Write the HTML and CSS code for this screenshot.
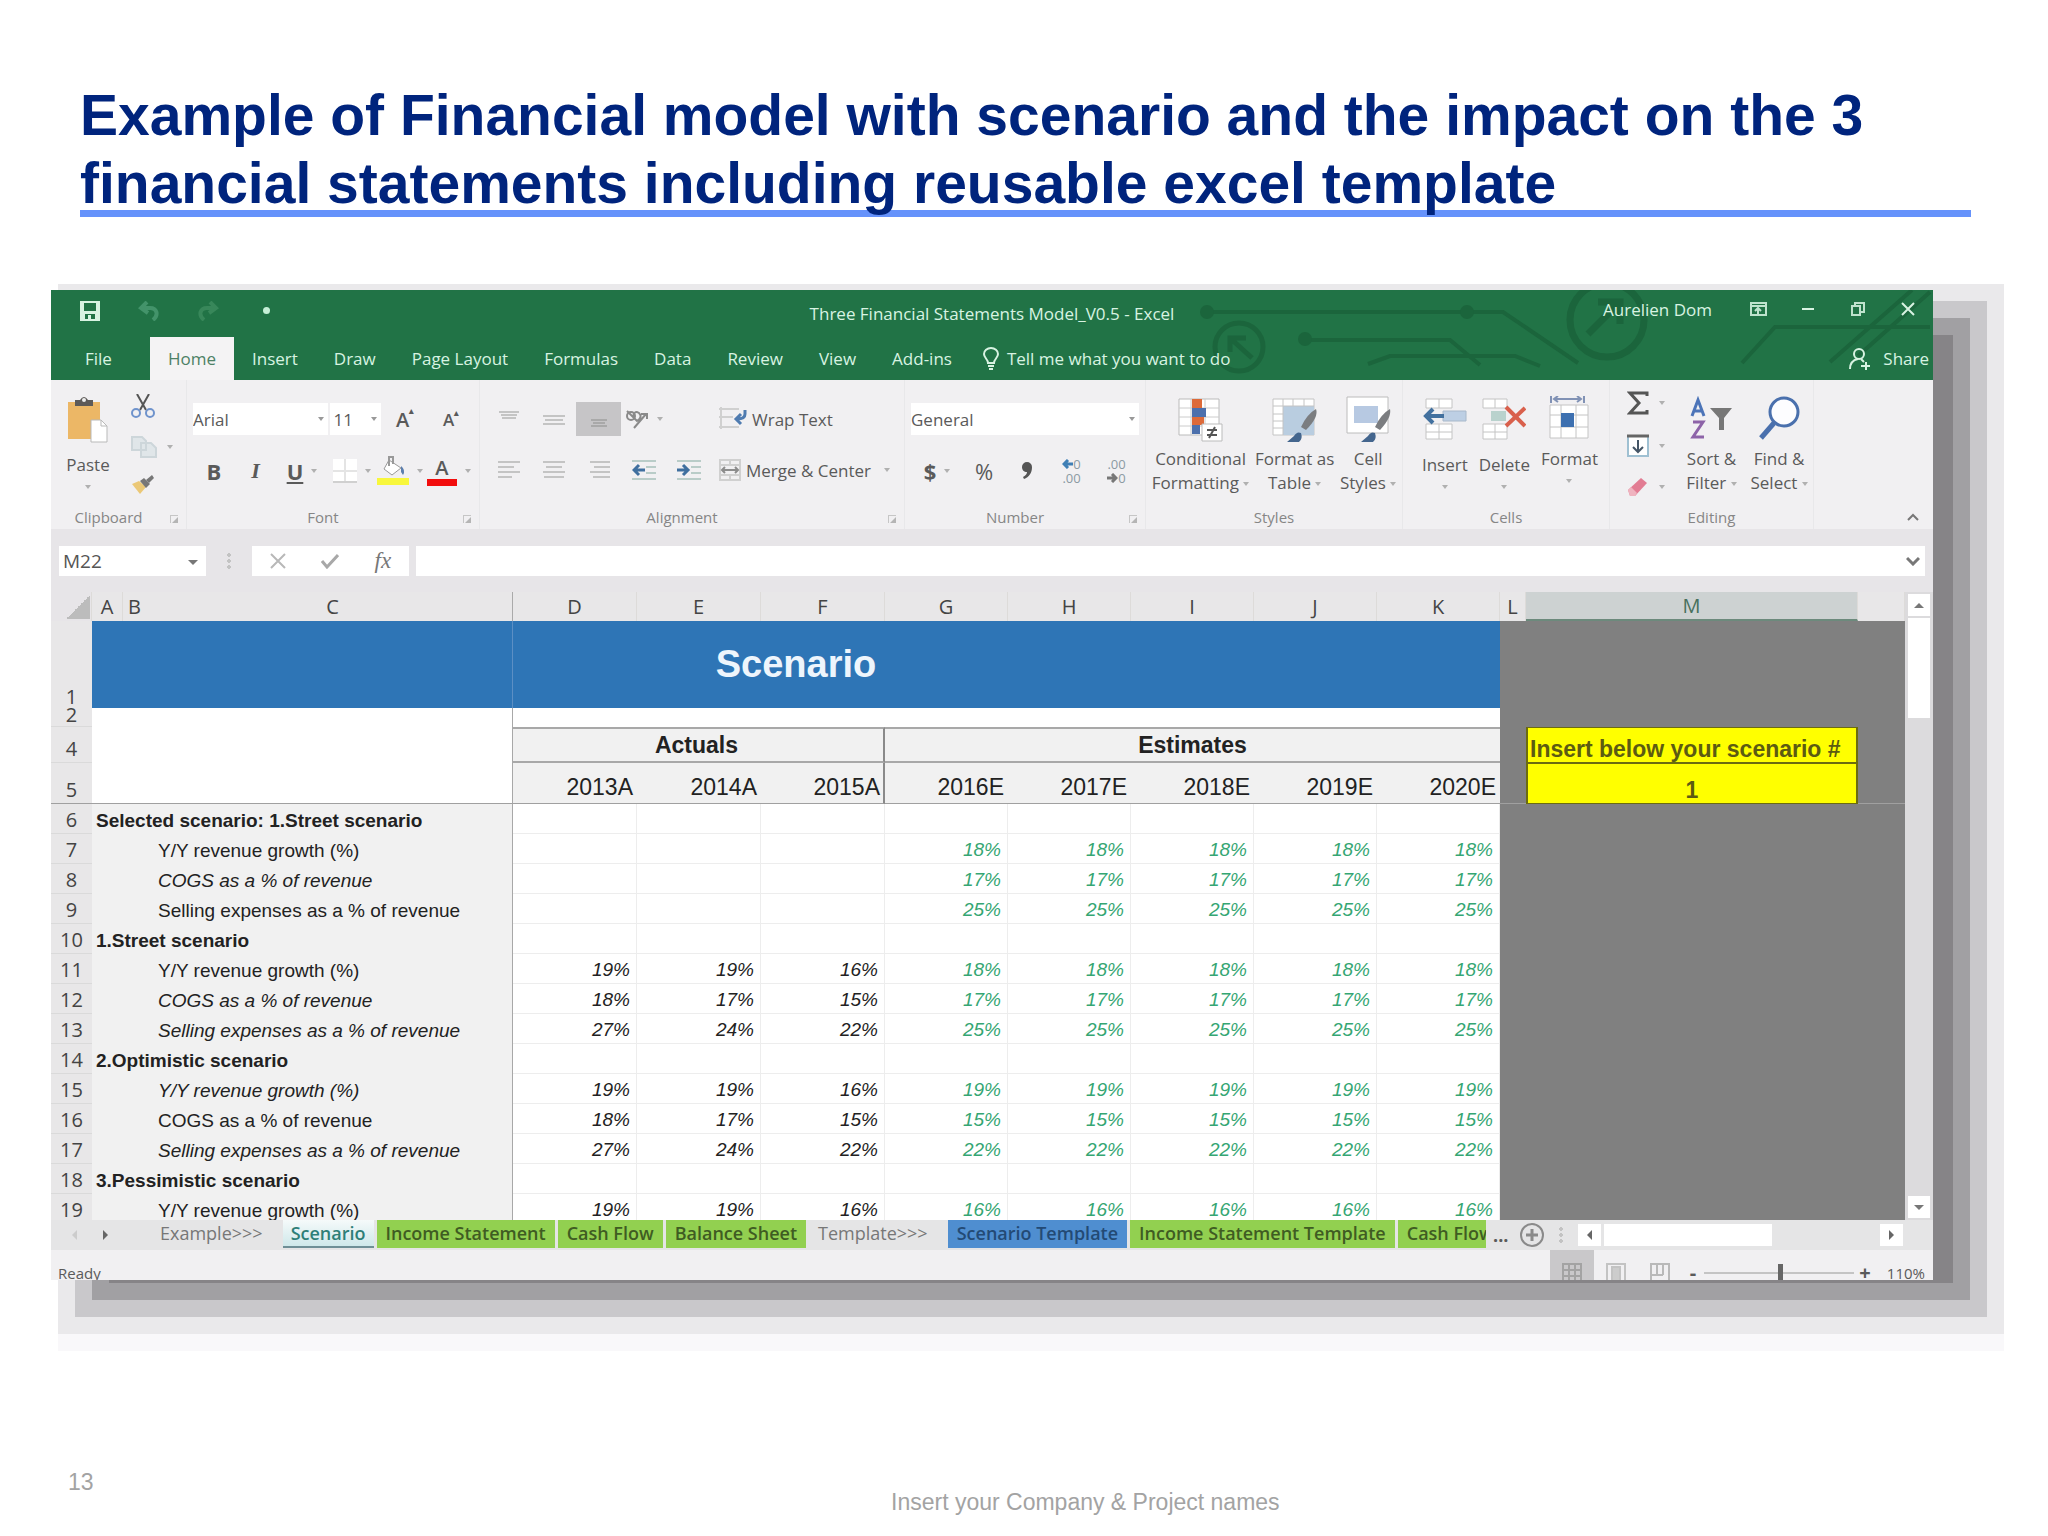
FILE: index.html
```html
<!DOCTYPE html>
<html lang="en">

<head>
  <meta charset="UTF-8">
  <meta name="viewport" content="width=device-width, initial-scale=1.0">
  <title>Financial model example</title>
  <link rel="stylesheet" href="styles.css">
</head>

<body>

  <header class="slide-header">
    <h1>Example of Financial model with scenario and the impact on the 3 financial statements including reusable excel template</h1>
  </header>

  <main class="window">

    <div class="green">
      <svg class="circuit" width="743" height="90" viewBox="0 0 743 90" fill="none" stroke="#1b653c" stroke-width="4">
        <path d="M17 22H313L388 73M115 50H260L290 75M178 74L200 66H325L350 76M552 73L585 37H740M640 72L722 0M668 66L740 2" />
        <circle cx="49" cy="57" r="24" stroke-width="5" />
        <path d="M40 48L62 68M40 62V48H56" stroke-width="5" />
        <circle cx="417" cy="30" r="37" stroke-width="7" />
        <path d="M398 44L428 14M408 12H430V34" stroke-width="7" />
        <g fill="#1b653c" stroke="none">
          <circle cx="17" cy="22" r="7" />
          <circle cx="277" cy="22" r="7" />
          <circle cx="115" cy="49" r="7" />
        </g>
      </svg>

      <div class="titlebar">
        <div class="quick">
          <button aria-label="Save">
            <svg width="20" height="20" viewBox="0 0 20 20"><path d="M0 0h20v20H0zM4 2v8h12V2zM5 13v5h3v-4h3v4h4v-5z" fill="#d8f3e2" fill-rule="evenodd" /></svg>
          </button>
          <button aria-label="Undo">
            <svg width="22" height="20" viewBox="0 0 22 20" fill="none" stroke="#43936a" stroke-width="4"><path d="M9 1L3 7l7 5M3 7h9c7 0 9 7 3 12" /></svg>
          </button>
          <button aria-label="Redo">
            <svg width="22" height="20" viewBox="0 0 22 20" fill="none" stroke="#38875a" stroke-width="4"><path d="M13 1l6 6-7 5M19 7h-9c-7 0-9 7-3 12" /></svg>
          </button>
          <button aria-label="Customize"><i class="dot"></i></button>
        </div>
        <div class="doc-title">Three Financial Statements Model_V0.5 - Excel</div>
        <div class="account">
          <span class="user">Aurelien Dom</span>
          <button aria-label="Ribbon display">
            <svg width="17" height="14" viewBox="0 0 17 14" fill="none" stroke="#bfe3cd" stroke-width="2"><path d="M1 1h15v12H1zM1 4h15M8 12V6M5 9l3-3 3 3" /></svg>
          </button>
          <button aria-label="Minimize">
            <svg width="14" height="14" viewBox="0 0 14 14"><path d="M1 7h12" stroke="#d8f3e2" stroke-width="2" /></svg>
          </button>
          <button aria-label="Restore">
            <svg width="14" height="14" viewBox="0 0 14 14" fill="none" stroke="#bfe3cd" stroke-width="2"><path d="M1 4h8v9H1zM4 4V1h9v9H9" /></svg>
          </button>
          <button aria-label="Close">
            <svg width="14" height="14" viewBox="0 0 14 14"><path d="M1 1l12 12M13 1L1 13" stroke="#d8f3e2" stroke-width="2" /></svg>
          </button>
        </div>
      </div>

      <nav class="menu">
        <a href="#" class="file">File</a>
        <a href="#" class="active">Home</a>
        <a href="#">Insert</a>
        <a href="#">Draw</a>
        <a href="#">Page Layout</a>
        <a href="#">Formulas</a>
        <a href="#">Data</a>
        <a href="#">Review</a>
        <a href="#">View</a>
        <a href="#">Add-ins</a>
        <a href="#" class="tell">
          <svg width="16" height="23" viewBox="0 0 16 23" fill="none" stroke="#d8f3e2" stroke-width="2"><path d="M5 16c0-4-4-5-4-9a7 6 0 0 1 14 0c0 4-4 5-4 9zM5 19h6M6 22h4" /></svg>
          Tell me what you want to do
        </a>
        <a href="#" class="share">
          <svg width="22" height="22" viewBox="0 0 22 22" fill="none" stroke="#d8f3e2" stroke-width="2"><circle cx="10" cy="6" r="5" /><path d="M1 21c0-6 3-9 8-10M12 11l3 3M12 18h9M17 14v8" /></svg>
          Share
        </a>
      </nav>
    </div>

    <div class="ribbon">

      <section class="group">
        <div class="group-body clipboard">
          <button class="big low">
            <svg width="42" height="48" viewBox="0 0 42 48"><path d="M1 6h32v37H1z" fill="#ecb766" /><path d="M8 4h5q4-6 8 0h5v6H8z" fill="#5d5a58" /><circle cx="17" cy="4" r="2" fill="#eee" /><path d="M24 24h10l6 6v16H24z" fill="#fff" stroke="#b9b9b9" /><path d="M34 24v6h6" fill="none" stroke="#b9b9b9" /></svg>
            <span>Paste</span><i class="arrow"></i>
          </button>
          <div class="stack">
            <button aria-label="Cut">
              <svg width="24" height="24" viewBox="0 0 24 24" fill="none" stroke-width="2"><path d="M6 0l9 16M18 0L9 16" stroke="#555" /><circle cx="5" cy="19" r="4" stroke="#6f93cc" /><circle cx="19" cy="19" r="4" stroke="#6f93cc" /></svg>
            </button>
            <button aria-label="Copy">
              <svg width="26" height="22" viewBox="0 0 26 22" fill="#e0e6e9" stroke="#cdd6da" stroke-width="2"><path d="M1 1h10l4 4v9H1zM10 7h10l5 5v9H10z" /></svg>
              <i class="arrow"></i>
            </button>
            <button aria-label="Format Painter">
              <svg width="24" height="20" viewBox="0 0 24 20"><path d="M1 9l7-3 7 6-6 7z" fill="#ebc877" /><path d="M9 6l4-3 6 6-4 4z" fill="#777" /><path d="M15 5l6-5 2 3-5 5z" fill="#777" /></svg>
            </button>
          </div>
        </div>
        <div class="group-name launches">Clipboard<i class="launcher"></i></div>
      </section>

      <section class="group">
        <div class="group-body rows">
          <div class="row font-row">
            <span class="pick"><select aria-label="Font"><option>Arial</option></select></span>
            <span class="pick size"><select aria-label="Font size"><option>11</option></select></span>
            <button class="grow-a" aria-label="Increase font size">A<sup>&#9652;</sup></button>
            <button class="grow-a small" aria-label="Decrease font size">A<sup>&#9652;</sup></button>
          </div>
          <div class="row style-row">
            <button class="bold">B</button>
            <button class="italic">I</button>
            <button class="under"><u>U</u><i class="arrow"></i></button>
            <button aria-label="Borders">
              <svg width="24" height="24" viewBox="0 0 24 24"><path d="M0 0h24v24H0z" fill="#fff" /><path d="M12 0v24M0 12h24" stroke="#e4e4e4" stroke-width="2" /><path d="M0 23h24" stroke="#d0d0d0" stroke-width="2" /></svg>
              <i class="arrow"></i>
            </button>
            <button aria-label="Fill color">
              <svg width="32" height="30" viewBox="0 0 32 30"><path d="M12 4l12 8-9 7-8-6z" fill="#fff" stroke="#999" /><path d="M12 10V1h4v7" fill="none" stroke="#999" stroke-width="2" /><path d="M24 10q5 4 2 9l-2-3z" fill="#5c7fae" /><path d="M0 22h32v7H0z" fill="#f8f73c" /></svg>
              <i class="arrow"></i>
            </button>
            <button class="font-color" aria-label="Font color"><span>A</span><i class="arrow"></i></button>
          </div>
        </div>
        <div class="group-name launches">Font<i class="launcher"></i></div>
      </section>

      <section class="group">
        <div class="group-body align">
          <button aria-label="Top align"><svg width="20" height="20" viewBox="0 0 20 20" stroke="#c4c4c4" stroke-width="2"><path d="M0 3h20M2 6h16M3 9h14" /></svg></button>
          <button aria-label="Middle align"><svg width="22" height="20" viewBox="0 0 22 20" stroke="#c4c4c4" stroke-width="2"><path d="M0 7h22M2 11h18M0 15h22" /></svg></button>
          <button class="pressed" aria-label="Bottom align"><svg width="20" height="20" viewBox="0 0 20 20" stroke="#a9a9a9" stroke-width="2"><path d="M2 11h16M4 14h12M2 17h16" /></svg></button>
          <button aria-label="Orientation">
            <svg width="24" height="20" viewBox="0 0 24 20" fill="none" stroke="#8a8a8a" stroke-width="2"><circle cx="6" cy="7" r="4" /><path d="M2 2l10 10q6-4 2-8-5-3-6 4M9 19L21 5M16 5h6v5" /></svg>
            <i class="arrow"></i>
          </button>
          <button class="wide">
            <svg width="28" height="24" viewBox="0 0 28 24" fill="none" stroke="#d0d0d0" stroke-width="2"><path d="M0 2h20M0 10h14M0 20h20M2 0v22" /><path d="M26 3v4q0 5-8 5M22 7l-5 5 5 5" stroke="#4f7bb0" stroke-width="3" /></svg>
            Wrap Text
          </button>
          <button aria-label="Align left"><svg width="22" height="20" viewBox="0 0 22 20" stroke="#c4c4c4" stroke-width="2"><path d="M0 2h22M0 7h16M0 12h22M0 17h14" /></svg></button>
          <button aria-label="Center"><svg width="22" height="20" viewBox="0 0 22 20" stroke="#c4c4c4" stroke-width="2"><path d="M0 2h22M3 7h16M0 12h22M1 17h20" /></svg></button>
          <button aria-label="Align right"><svg width="22" height="20" viewBox="0 0 22 20" stroke="#c4c4c4" stroke-width="2"><path d="M2 2h20M6 7h16M2 12h20M5 17h17" /></svg></button>
          <button aria-label="Decrease indent"><svg width="24" height="20" viewBox="0 0 24 20" fill="none" stroke="#b9ccc8" stroke-width="2"><path d="M0 1h24M14 7h10M14 13h10M0 19h24" /><path d="M2 10h11M7 5l-5 5 5 5" stroke="#3f6f9f" stroke-width="3" /></svg></button>
          <button aria-label="Increase indent"><svg width="24" height="20" viewBox="0 0 24 20" fill="none" stroke="#b9ccc8" stroke-width="2"><path d="M0 1h24M14 7h10M14 13h10M0 19h24" /><path d="M0 10h11M6 5l5 5-5 5" stroke="#3f6f9f" stroke-width="3" /></svg></button>
          <button class="wide">
            <svg width="22" height="22" viewBox="0 0 22 22" fill="none" stroke="#d0d0d0" stroke-width="2"><path d="M1 1h20v20H1zM11 1v5M11 16v5M1 6h20M1 16h20" /><path d="M3 11h16M6 8l-3 3 3 3M16 8l3 3-3 3" stroke="#8c8c8c" /></svg>
            Merge &amp; Center <i class="arrow"></i>
          </button>
        </div>
        <div class="group-name launches">Alignment<i class="launcher"></i></div>
      </section>

      <section class="group">
        <div class="group-body rows">
          <div class="row number-row">
            <span class="pick"><select aria-label="Number format"><option>General</option></select></span>
          </div>
          <div class="row digits-row">
            <button class="glyph"><b>$</b><i class="arrow"></i></button>
            <button class="glyph">%</button>
            <button class="comma" aria-label="Comma style"><svg width="12" height="18" viewBox="0 0 12 18"><path d="M1 5a5 5 0 0 1 10 0c0 6-3 10-8 12l-1-2c3-2 4-3 4-5-3 0-5-2-5-5z" fill="#555" /></svg></button>
            <button class="decimals"><span><svg width="11" height="10" viewBox="0 0 11 10" fill="none" stroke="#3f7fb5" stroke-width="3"><path d="M2 5h9M6 1L2 5l4 4" /></svg>0</span><span>.00</span></button>
            <button class="decimals"><span>.00</span><span><svg width="11" height="10" viewBox="0 0 11 10" fill="none" stroke="#777" stroke-width="3"><path d="M0 5h9M5 1l4 4-4 4" /></svg>0</span></button>
          </div>
        </div>
        <div class="group-name launches">Number<i class="launcher"></i></div>
      </section>

      <section class="group">
        <div class="group-body bigs">
          <button class="big">
            <svg width="48" height="48" viewBox="0 0 48 48"><path d="M2 3h40v36H2z" fill="#fff" stroke="#bbb" /><path d="M2 12h40M2 21h40M2 30h40M14 3v36M28 3v36" stroke="#ccc" /><path d="M15 3h10v9H15zM15 21h12v8H15z" fill="#dd6a39" /><path d="M15 12h14v9H15zM15 29h8v9h-8z" fill="#4c70ad" /><path d="M25 28h20v17H25z" fill="#fff" stroke="#bbb" /><path d="M30 34h10M30 39h10M38 31l-6 11" stroke="#555" stroke-width="2" /></svg>
            <span>Conditional<br>Formatting <i class="arrow"></i></span>
          </button>
          <button class="big">
            <svg width="48" height="48" viewBox="0 0 48 48"><path d="M2 3h41v36H2z" fill="#fff" stroke="#c4c4c4" /><path d="M12 10h31v29H12z" fill="#b9cde0" /><path d="M2 10h41M2 18h10M2 25h10M2 32h10M12 3v36M22 3v7M33 3v7" stroke="#c4c4c4" /><path d="M45 13q3 8-10 21l-5-3q6-13 15-18z" fill="#7b7d80" /><path d="M30 37q-4-2-7 3l-7 6h12q4-3 2-9z" fill="#44668e" /></svg>
            <span>Format as<br>Table <i class="arrow"></i></span>
          </button>
          <button class="big">
            <svg width="48" height="48" viewBox="0 0 48 48"><path d="M3 1h41v36H3z" fill="#fff" stroke="#bcbcbc" /><path d="M10 10h24v17H10z" fill="#b7c9e2" /><path d="M46 13q2 8-10 21l-5-3q6-13 15-18z" fill="#7b7d80" /><path d="M31 37q-4-2-7 3l-7 6h12q4-3 2-9z" fill="#44668e" /></svg>
            <span>Cell<br>Styles <i class="arrow"></i></span>
          </button>
        </div>
        <div class="group-name">Styles</div>
      </section>

      <section class="group">
        <div class="group-body bigs cells">
          <button class="big low">
            <svg width="44" height="48" viewBox="0 0 44 48"><path d="M3 3h26v9H3zM3 28h26v15H3zM3 36h26M16 3v9M16 28v15" fill="#fff" stroke="#c4c4c4" /><path d="M20 15h23v10H20z" fill="#bdcfe4" stroke="#a8b8ca" /><path d="M2 20h19M10 13l-7 7 7 7" fill="none" stroke="#43719f" stroke-width="4" /></svg>
            <span>Insert</span><i class="arrow"></i>
          </button>
          <button class="big low">
            <svg width="44" height="48" viewBox="0 0 44 48"><path d="M1 3h24v9H1zM1 28h24v15H1zM1 36h24M13 3v9M13 28v15" fill="#fff" stroke="#c4c4c4" /><path d="M9 15h15v10H9z" fill="#b9d2cd" /><path d="M24 11l19 19M43 12L24 30" stroke="#d9604c" stroke-width="4" /></svg>
            <span>Delete</span><i class="arrow"></i>
          </button>
          <button class="big">
            <svg width="44" height="48" viewBox="0 0 44 48"><path d="M3 9h38v33H3zM3 19h38M3 31h38M14 9v33M29 9v33" fill="#fff" stroke="#c4c4c4" /><path d="M14 17h13v14H14z" fill="#3d70b0" /><path d="M7 3h27M11 0L7 3l4 3M30 0l4 3-4 3M4 0v7M37 0v7" fill="none" stroke="#8192b5" stroke-width="2" /></svg>
            <span>Format</span><i class="arrow"></i>
          </button>
        </div>
        <div class="group-name">Cells</div>
      </section>

      <section class="group">
        <div class="group-body editing">
          <div class="stack">
            <button aria-label="AutoSum"><svg width="22" height="24" viewBox="0 0 22 24" fill="none" stroke="#555" stroke-width="3"><path d="M20 5V2H3l9 10L3 22h17v-3" /></svg><i class="arrow"></i></button>
            <button aria-label="Fill"><svg width="22" height="24" viewBox="0 0 22 24" fill="none"><path d="M1 2h20v20H1z" fill="#fff" stroke="#9fc0d2" stroke-width="2" /><path d="M0 2h22" stroke="#666" stroke-width="3" /><path d="M11 6v12M6 13l5 5 5-5" stroke="#456" stroke-width="2" /></svg><i class="arrow"></i></button>
            <button aria-label="Clear"><svg width="22" height="20" viewBox="0 0 22 20"><path d="M1 13L14 1l6 5L8 19H3z" fill="#e27c93" /><path d="M1 13l3-3 6 6-2 3H3z" fill="#efb3bf" /></svg><i class="arrow"></i></button>
          </div>
          <button class="big">
            <svg width="42" height="48" viewBox="0 0 42 48" fill="none" stroke-width="3"><path d="M2 20L8 4l6 16M4 15h8" stroke="#4c74b8" /><path d="M3 26h10L3 41h11" stroke="#8d63a8" /><path d="M20 12h22l-8 10v12h-5V22z" fill="#777" /></svg>
            <span>Sort &amp;<br>Filter <i class="arrow"></i></span>
          </button>
          <button class="big">
            <svg width="42" height="48" viewBox="0 0 42 48" fill="none" stroke="#4a70ad"><circle cx="26" cy="16" r="14" fill="#fdfdff" stroke-width="3" /><path d="M16 27L3 42" stroke-width="5" /></svg>
            <span>Find &amp;<br>Select <i class="arrow"></i></span>
          </button>
        </div>
        <div class="group-name">Editing</div>
      </section>

      <div class="collapse">
        <button aria-label="Collapse ribbon"><svg width="12" height="8" viewBox="0 0 12 8" fill="none" stroke="#777" stroke-width="2"><path d="M1 7l5-5 5 5" /></svg></button>
      </div>
    </div>

    <div class="formula-bar">
      <span class="pick name-box"><select aria-label="Name box"><option>M22</option></select></span>
      <i class="grip"></i>
      <div class="fx-box">
        <button aria-label="Cancel"><svg width="16" height="16" viewBox="0 0 16 16"><path d="M1 1l14 14M15 1L1 15" stroke="#b8b8b8" stroke-width="2" /></svg></button>
        <button aria-label="Enter"><svg width="18" height="16" viewBox="0 0 18 16" fill="none"><path d="M1 8l5 6L17 2" stroke="#a8a8a8" stroke-width="3" /></svg></button>
        <button class="fx">fx</button>
      </div>
      <div class="formula-field">
        <input type="text" aria-label="Formula">
        <svg width="14" height="10" viewBox="0 0 14 10" fill="none"><path d="M1 2l6 6 6-6" stroke="#777" stroke-width="3" /></svg>
      </div>
    </div>

    <div class="sheet">
      <table>
        <colgroup>
          <col class="c-head"><col class="c-a"><col class="c-b"><col class="c-c">
          <col class="c-actual"><col class="c-actual"><col class="c-actual">
          <col class="c-estimate"><col class="c-estimate"><col class="c-estimate"><col class="c-estimate"><col class="c-estimate">
          <col class="c-l"><col class="c-m"><col class="c-rest">
        </colgroup>
        <thead>
          <tr class="letters">
            <th class="corner"></th>
            <th>A</th><th class="letter-b">B</th><th class="letter-c">C</th>
            <th>D</th><th>E</th><th>F</th><th>G</th><th>H</th><th>I</th><th>J</th><th>K</th>
            <th>L</th><th class="selected">M</th><th></th>
          </tr>
        </thead>
        <tbody id="rows">
          <tr class="r1">
            <th>1</th>
            <td class="banner" colspan="11">Scenario</td>
            <td class="grey" colspan="3"></td>
          </tr>
          <tr class="r2">
            <th><div>2</div></th>
            <td class="blank frozen" colspan="3"></td>
            <td class="blank" colspan="8"></td>
            <td class="grey" colspan="3"></td>
          </tr>
          <tr class="r4">
            <th>4</th>
            <td class="blank frozen" colspan="3"></td>
            <td class="period actual-end" colspan="3">Actuals</td>
            <td class="period" colspan="5">Estimates</td>
            <td class="grey"></td>
            <td class="yellow prompt">Insert below your scenario #</td>
            <td class="grey"></td>
          </tr>
          <tr class="r5">
            <th>5</th>
            <td class="blank frozen" colspan="3"></td>
            <td class="year">2013A</td><td class="year">2014A</td><td class="year actual-end">2015A</td>
            <td class="year">2016E</td><td class="year">2017E</td><td class="year">2018E</td><td class="year">2019E</td><td class="year">2020E</td>
            <td class="grey"></td>
            <td class="yellow">1</td>
            <td class="grey"></td>
          </tr>
        </tbody>
      </table>
      <div class="v-scroll">
        <button aria-label="Scroll up"><i class="tri up"></i></button>
        <i class="thumb"></i>
        <button aria-label="Scroll down"><i class="tri down"></i></button>
      </div>
    </div>

    <div class="sheet-tabs">
      <div class="tab-nav"><i class="tri left faint"></i><i class="tri right"></i></div>
      <div class="tabs">
        <a href="#" class="plain">Example&gt;&gt;&gt;</a>
        <a href="#" class="current">Scenario</a>
        <a href="#">Income Statement</a>
        <a href="#">Cash Flow</a>
        <a href="#">Balance Sheet</a>
        <a href="#" class="plain">Template&gt;&gt;&gt;</a>
        <a href="#" class="blue">Scenario Template</a>
        <a href="#">Income Statement Template</a>
        <a href="#">Cash Flow</a>
      </div>
      <span class="more">...</span>
      <button class="add" aria-label="New sheet"><svg width="24" height="24" viewBox="0 0 24 24" fill="none" stroke="#8a8a8a"><circle cx="12" cy="12" r="11" stroke-width="2" /><path d="M12 6v12M6 12h12" stroke-width="3" /></svg></button>
      <i class="grip"></i>
      <div class="h-scroll">
        <button aria-label="Scroll left"><i class="tri left"></i></button>
        <i class="thumb"></i>
        <button aria-label="Scroll right"><i class="tri right"></i></button>
      </div>
    </div>

    <div class="status">
      <span class="ready">Ready</span>
      <button class="view on" aria-label="Normal view"><svg width="20" height="20" viewBox="0 0 20 20" fill="none" stroke="#a3a3a3" stroke-width="2"><path d="M1 1h18v18H1zM1 7h18M1 13h18M7 1v18M13 1v18" /></svg></button>
      <button class="view" aria-label="Page layout view"><svg width="20" height="20" viewBox="0 0 20 20" fill="none" stroke="#c3c3c3" stroke-width="2"><path d="M1 1h18v18H1z" /><path d="M6 4h8v15H6z" fill="#ccc" /></svg></button>
      <button class="view" aria-label="Page break view"><svg width="20" height="20" viewBox="0 0 20 20" fill="none" stroke="#b9b9b9" stroke-width="2"><path d="M1 20V1h18v18M7 1v11M13 1v11M1 12h12" /></svg></button>
      <button class="zoom-btn" aria-label="Zoom out">-</button>
      <input type="range" min="0" max="100" value="51" aria-label="Zoom">
      <button class="zoom-btn" aria-label="Zoom in">+</button>
      <span class="percent">110%</span>
    </div>

  </main>

  <footer class="slide-footer">
    <span class="page">13</span>
    <span class="company">Insert your Company &amp; Project names</span>
  </footer>

  <script>
    const GROWTH = 'Y/Y revenue growth (%)'
    const COGS = 'COGS as a % of revenue'
    const SELLING = 'Selling expenses as a % of revenue'

    // [label, style, actuals, estimate]
    const rows = [
      ['Selected scenario: 1.Street scenario', 'title'],
      [GROWTH, '', [], 18],
      [COGS, 'slanted', [], 17],
      [SELLING, '', [], 25],
      ['1.Street scenario', 'title'],
      [GROWTH, '', [19, 19, 16], 18],
      [COGS, 'slanted', [18, 17, 15], 17],
      [SELLING, 'slanted', [27, 24, 22], 25],
      ['2.Optimistic scenario', 'title'],
      [GROWTH, 'slanted', [19, 19, 16], 19],
      [COGS, '', [18, 17, 15], 15],
      [SELLING, 'slanted', [27, 24, 22], 22],
      ['3.Pessimistic scenario', 'title'],
      [GROWTH, '', [19, 19, 16], 16]
    ]

    const tbody = document.querySelector('#rows')
    rows.forEach(([label, style, actuals = [], estimate], index) => {
      let cells = `<th>${index + 6}</th><td class="label ${style}" colspan="3">${label}</td>`
      for (let i = 0; i < 3; i++) {
        cells += `<td class="value">${actuals[i] ? actuals[i] + '%' : ''}</td>`
      }
      for (let i = 0; i < 5; i++) {
        cells += `<td class="value estimate">${estimate ? estimate + '%' : ''}</td>`
      }
      cells += '<td class="grey" colspan="3"></td>'
      tbody.insertAdjacentHTML('beforeend', `<tr class="data">${cells}</tr>`)
    })
  </script>
</body>

</html>
```
FILE: styles.css
```css
* {
  box-sizing: border-box;
  margin: 0;
  padding: 0;
}

body {
  display: flex;
  flex-direction: column;
  min-height: 100vh;
  background-color: #fff;
  font-family: "Liberation Sans", Arial, sans-serif;
}

button,
select,
input {
  border: 0;
  background: none;
  color: inherit;
  font: inherit;
}

button {
  display: flex;
  align-items: center;
  justify-content: center;
}

a {
  color: inherit;
  text-decoration: none;
}

svg {
  flex: none;
}

/* slide title */
.slide-header {
  margin: 81px 77px 0 80px;
  background: linear-gradient(#6592fb, #6592fb) bottom / 100% 7px no-repeat;
}

.slide-header h1 {
  color: #00247d;
  font-size: 57px;
  line-height: 68px;
}

/* excel window */
.window {
  position: relative;
  margin: 73px 115px 0 51px;
  background-color: #f1f0f2;
  color: #5a5a5a;
  font-family: "Open Sans", "Noto Sans", sans-serif;
  font-size: 17px;
}

/* stepped shadow under the window */
.window::before {
  content: "";
  position: absolute;
  z-index: -1;
  top: 45px;
  right: -20px;
  bottom: -3px;
  left: 58px;
  background-color: #868487;
  box-shadow: 0 0 0 17px #a1a0a3, 0 0 0 34px #c9c8cb, 0 0 0 51px #eae9eb, 0 17px 0 51px #f9f8fa;
}

/* little down arrow after buttons */
.arrow {
  display: inline-block;
  border: 3px solid transparent;
  border-top: 4px solid #b0b0b0;
  border-bottom: 0;
  vertical-align: middle;
}

.green {
  position: relative;
  background-color: #217346;
  color: #d8f3e2;
}

.circuit {
  position: absolute;
  top: 0;
  right: 0;
}

.titlebar {
  position: relative;
  display: grid;
  grid-template-columns: 1fr auto 1fr;
  align-items: center;
  height: 47px;
}

.quick {
  display: flex;
  padding: 0 0 6px 9px;
}

.quick button {
  width: 59px;
}

.dot {
  width: 7px;
  height: 7px;
  border-radius: 50%;
  background-color: #c5efd6;
}

.account {
  display: flex;
  align-items: center;
  align-self: start;
  justify-content: flex-end;
  height: 38px;
}

.account .user {
  margin-right: 21px;
}

.account button {
  width: 50px;
  height: 38px;
}

.menu {
  position: relative;
  display: flex;
  height: 43px;
}

.menu a {
  display: flex;
  align-items: center;
  padding: 0 18px;
  white-space: nowrap;
}

.menu .file {
  padding: 0 38px 0 34px;
}

.menu .active {
  background-color: #f4f3f4;
  color: #4d8165;
}

.menu .tell {
  gap: 8px;
  padding-left: 13px;
}

.menu .share {
  gap: 12px;
  margin-left: auto;
  padding-right: 4px;
}

/* ribbon */
.ribbon {
  display: grid;
  grid-template-columns: 136fr 293fr 425fr 241fr 257fr 207fr 204fr 119fr;
  height: 149px;
}

.group {
  display: flex;
  flex-direction: column;
  min-width: 0;
  border-right: 1px solid #e8e8ea;
}

.group-body {
  flex: 1;
}

.group-name {
  position: relative;
  height: 24px;
  color: #868686;
  font-size: 15px;
  line-height: 24px;
  text-align: center;
}

.launches {
  padding-right: 20px;
}

.launcher {
  position: absolute;
  top: 10px;
  right: 8px;
  width: 8px;
  height: 8px;
  border-top: 1px solid #c6c6c6;
  border-left: 1px solid #c6c6c6;
}

.launcher::after {
  content: "";
  position: absolute;
  right: 0;
  bottom: 0;
  border: 3px solid transparent;
  border-right-color: #b5b5b5;
  border-bottom-color: #b5b5b5;
}

.clipboard {
  display: grid;
  grid-template-columns: 74px 1fr;
}

.big {
  display: flex;
  flex-direction: column;
  justify-content: flex-start;
  padding-top: 16px;
  line-height: 24px;
  white-space: nowrap;
}

.big svg {
  margin-bottom: 3px;
}

.big.low svg {
  margin-bottom: 9px;
}

.big > .arrow {
  margin-top: 8px;
}

.stack {
  display: flex;
  flex-direction: column;
  justify-content: space-between;
  padding: 14px 0 10px 6px;
}

.stack button {
  justify-content: flex-start;
  gap: 10px;
}

.rows {
  display: grid;
  grid-template-rows: 32px 32px;
  row-gap: 20px;
  padding: 23px 6px 0;
}

.row {
  display: grid;
  align-items: center;
}

.row button {
  gap: 8px;
}

.pick {
  position: relative;
  display: block;
  background-color: #fff;
}

.pick::after {
  content: "";
  position: absolute;
  top: 14px;
  right: 4px;
  border: 3px solid transparent;
  border-top: 4px solid #999;
  border-bottom: 0;
}

.pick select {
  width: 100%;
  height: 32px;
  appearance: none;
}

.pick.size select {
  padding-left: 4px;
}

.font-row {
  grid-template-columns: 141fr 54fr 46fr 46fr;
  column-gap: 2px;
}

.grow-a {
  font-size: 20px;
  font-weight: 600;
}

.grow-a.small {
  font-size: 17px;
}

.row .grow-a {
  gap: 0;
}

.grow-a sup {
  align-self: flex-start;
  font-size: 9px;
  line-height: 9px;
}

.style-row {
  grid-template-columns: 43fr 43fr 53fr 50fr 50fr 50fr;
}

.bold,
.italic,
.under {
  font-size: 22px;
  font-weight: 700;
}

.italic {
  font-family: "Liberation Serif", serif;
  font-style: italic;
}

.font-color span {
  width: 30px;
  border-bottom: 7px solid #f20d0d;
  font-size: 20px;
  font-weight: 600;
  line-height: 22px;
}

.align {
  display: grid;
  grid-template-columns: 45px 45px 45px 45px 45px 1fr;
  grid-template-rows: 34px 34px;
  row-gap: 17px;
  padding: 22px 6px 0;
}

.align button {
  gap: 8px;
}

/* wrap text sits in the last column of the first row */
.align .wide {
  grid-column: 6;
  justify-content: flex-start;
  gap: 5px;
  padding-left: 8px;
  white-space: nowrap;
}

.align .wide .arrow {
  margin-left: 8px;
}

.align .pressed {
  background-color: #c6c5c7;
}

.digits-row {
  grid-template-columns: 52fr 42fr 44fr 45fr 45fr;
}

.glyph {
  font-size: 22px;
}

.row .decimals {
  flex-direction: column;
  gap: 0;
  align-items: flex-end;
  justify-self: center;
  color: #8b9aa3;
  font-size: 13px;
  line-height: 14px;
}

.bigs {
  display: flex;
  justify-content: space-evenly;
}

.cells {
  padding-left: 8px;
}

.editing {
  display: grid;
  grid-template-columns: 68fr 68fr 68fr;
}

.editing .stack {
  padding: 11px 0 8px 17px;
}

.collapse {
  display: flex;
  align-items: flex-end;
  justify-content: flex-end;
  padding: 8px 14px;
}

/* formula bar */
.formula-bar {
  display: flex;
  align-items: center;
  height: 63px;
  padding: 0 8px;
  background-color: #e7e5e8;
  color: #555;
}

.name-box {
  width: 147px;
  font-size: 19px;
}

.name-box::after {
  right: 8px;
  border-width: 5px 5px 0;
  border-top-color: #777;
}

.formula-bar .name-box select {
  height: 30px;
  padding-left: 4px;
}

.grip {
  width: 46px;
  height: 18px;
  background: radial-gradient(circle, #c3c3c3 2px, transparent 2px) center / 46px 6px repeat-y;
}

.fx-box {
  display: grid;
  grid-template-columns: repeat(3, 1fr);
  width: 157px;
  height: 30px;
  margin-right: 7px;
  background-color: #fff;
}

.fx {
  color: #777;
  font-family: "Liberation Serif", serif;
  font-size: 23px;
  font-style: italic;
}

.formula-field {
  display: flex;
  flex: 1;
  align-items: center;
  height: 30px;
  padding-right: 5px;
  background-color: #fff;
}

.formula-field input {
  flex: 1;
  height: 30px;
  padding: 0 6px;
}

/* sheet */
.sheet {
  display: flex;
  max-height: 628px;
  overflow: hidden;
  background-color: #e7e5e8;
}

.sheet table {
  flex: 1;
  width: 0;
  table-layout: fixed;
  border-spacing: 0;
  font-family: "Liberation Sans", Arial, sans-serif;
  color: #222;
}

.c-head {
  width: 41px;
}

.c-a {
  width: 31px;
}

.c-b {
  width: 38px;
}

.c-c {
  width: 352px;
}

.c-actual {
  width: 124px;
}

.c-estimate {
  width: 123px;
}

.c-l {
  width: 26px;
}

.c-m {
  width: auto;
}

.c-rest {
  width: 47px;
}

.sheet th {
  border-bottom: 1px solid #dadada;
  background-color: #e8e7e8;
  color: #444;
  font-family: "Open Sans", "Noto Sans", sans-serif;
  font-size: 20px;
  font-weight: 400;
}

.letters th {
  height: 29px;
  border-right: 1px solid #dddbd9;
  border-bottom: 0;
  line-height: 27px;
}

.sheet .letter-b {
  padding-left: 5px;
  border-right: 0;
  text-align: left;
}

.sheet .letter-c {
  padding-right: 8px;
  border-right: 1px solid #aaa;
}

.sheet .corner {
  background: linear-gradient(135deg, transparent 50%, #bcbcbc 50%) 15px 3px / 24px 24px no-repeat #e7e5e8;
}

.letters .selected {
  border-bottom: 2px solid #6c8a7c;
  background-color: #cdd2d2;
  color: #47705d;
}

.sheet .grey {
  background-color: #808080;
}

.r1 th {
  height: 87px;
  border-bottom: 0;
  line-height: 22px;
  vertical-align: bottom;
}

.banner {
  background: linear-gradient(#5c8fc4, #5c8fc4) 420px 0 / 1px 100% no-repeat #2e75b6;
  color: #eef5fc;
  font-size: 38px;
  font-weight: 700;
  text-align: center;
}

/* row 2 is nearly collapsed, its number is cut at the top */
.r2 th div {
  display: flex;
  align-items: flex-end;
  justify-content: center;
  height: 18px;
  overflow: hidden;
  line-height: 22px;
}

.blank {
  background-color: #fff;
}

.sheet .frozen {
  border-right: 1px solid #a8a8a8;
}

.r4 > * {
  height: 36px;
}

.r5 > * {
  height: 41px;
}

.r5 > th,
.r5 > td {
  border-bottom: 1px solid #a0a0a0;
}

.r5 th,
.r4 th {
  line-height: 27px;
  vertical-align: bottom;
}

.period {
  border-top: 2px solid #a8a8a8;
  border-bottom: 2px solid #a8a8a8;
  background-color: #f1f1f1;
  font-size: 23px;
  font-weight: 700;
  line-height: 26px;
  text-align: center;
}

.year {
  padding: 8px 4px 0 0;
  background-color: #f1f1f1;
  font-size: 23px;
  line-height: 26px;
  text-align: right;
}

.actual-end {
  padding-right: 3px;
  border-right: 2px solid #8a8a8a;
}

.sheet .yellow {
  border: 2px solid #6b6b10;
  border-top-width: 1px;
  border-bottom-width: 1px;
  background-color: #ff0;
  color: #5c5b12;
  font-size: 23px;
  font-weight: 700;
  line-height: 26px;
  text-align: center;
  vertical-align: bottom;
  white-space: nowrap;
}

.sheet .prompt {
  padding-left: 2px;
  text-align: left;
}

.data > * {
  height: 30px;
  padding-top: 2px;
  line-height: 27px;
}

.data td {
  font-size: 19px;
  white-space: nowrap;
}

.data .label {
  padding-left: 66px;
  border-right: 1px solid #a8a8a8;
  background-color: #f1f1f1;
}

.data .title {
  padding-left: 4px;
  font-weight: 700;
}

.slanted {
  font-style: italic;
}

.value {
  padding-right: 6px;
  border-right: 1px solid #ededed;
  border-bottom: 1px solid #ededed;
  background-color: #fff;
  font-style: italic;
  text-align: right;
}

.estimate {
  color: #35a673;
}

/* scrollbars */
.tri {
  border: 5px solid transparent;
}

.tri.up {
  border-bottom-color: #777;
  border-top: 0;
}

.tri.down {
  border-top-color: #777;
  border-bottom: 0;
}

.tri.left {
  border-right-color: #666;
  border-left: 0;
}

.tri.right {
  border-left-color: #666;
  border-right: 0;
}

.tri.faint {
  border-right-color: #ccc;
}

.v-scroll {
  display: flex;
  flex-direction: column;
  gap: 2px;
  width: 28px;
  padding: 2px 3px;
  background-color: #dcdbdd;
}

.v-scroll button {
  height: 22px;
  background-color: #fff;
}

.v-scroll button:last-child {
  margin-top: auto;
}

.v-scroll .thumb {
  height: 100px;
  background-color: #fff;
}

/* sheet tabs */
.sheet-tabs {
  display: flex;
  align-items: center;
  height: 30px;
  background-color: #e5e5e6;
}

.tab-nav {
  display: flex;
  gap: 26px;
  width: 100px;
  padding-left: 21px;
}

.tabs {
  display: flex;
  flex: 1;
  gap: 3px;
  min-width: 0;
  height: 28px;
  margin-bottom: 2px;
  overflow: hidden;
}

.tabs a {
  padding: 0 9px;
  background-color: #92d050;
  color: #3f5c22;
  font-size: 18px;
  font-weight: 600;
  line-height: 27px;
  white-space: nowrap;
}

.tabs .plain {
  padding-right: 17px;
  background-color: #e5e5e6;
  color: #777;
  font-weight: 400;
}

.tabs .current {
  padding: 0 8px;
  border-bottom: 2px solid #6f8f96;
  background: linear-gradient(#f5fafa, #cfe8ea);
  color: #2e7f78;
}

.tabs .blue {
  background-color: #4f8ed0;
  color: #234a75;
}

.more {
  width: 34px;
  padding-left: 7px;
  font-size: 18px;
  font-weight: 700;
}

.sheet-tabs .grip {
  width: 34px;
}

.h-scroll {
  display: flex;
  gap: 3px;
  width: 325px;
  height: 22px;
  margin-right: 30px;
}

.h-scroll button {
  width: 23px;
  background-color: #fff;
}

.h-scroll button:last-child {
  margin-left: auto;
}

.h-scroll .thumb {
  width: 168px;
  background-color: #fff;
}

/* status bar, its lower part is cut off */
.status {
  display: flex;
  height: 30px;
  padding: 0 8px 0 7px;
  overflow: hidden;
  font-size: 15px;
  line-height: 46px;
}

.ready {
  margin-right: auto;
}

.view {
  width: 44px;
  height: 46px;
}

.view.on {
  background-color: #c9c8ca;
}

.zoom-btn {
  width: 22px;
  height: 46px;
  font-size: 20px;
  font-weight: 700;
}

.status input {
  width: 150px;
  height: 46px;
  appearance: none;
}

.status input::-webkit-slider-runnable-track {
  height: 2px;
  background-color: #c4c4c4;
}

.status input::-webkit-slider-thumb {
  width: 5px;
  height: 18px;
  margin-top: -8px;
  appearance: none;
  background-color: #666;
}

.percent {
  width: 49px;
  text-align: right;
}

/* slide footer */
.slide-footer {
  display: grid;
  grid-template-columns: 823fr 1157fr;
  align-items: end;
  margin-top: auto;
  padding: 0 0 21px 68px;
  color: #a3a3a3;
  font-size: 23px;
  line-height: 26px;
}

.page {
  padding-bottom: 20px;
}
```
